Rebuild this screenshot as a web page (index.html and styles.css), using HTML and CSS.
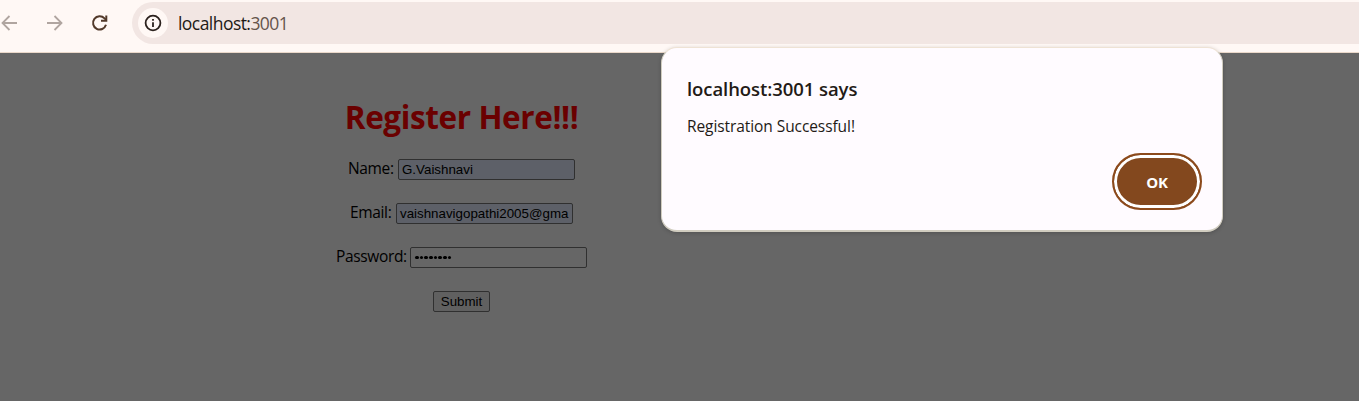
FILE: index.html
```html
<!DOCTYPE html>
<html lang="en">
<head>
<meta charset="utf-8">
<title>localhost:3001</title>
<link rel="stylesheet" href="styles.css">
</head>
<body>
<header class="toolbar">
  <nav class="nav">
    <svg class="icon muted" viewBox="0 0 18 18"><path d="M17 9H3M9.5 2L2.5 9L9.5 16"/></svg>
    <svg class="icon muted" viewBox="0 0 18 18"><path d="M2 9H16M9.5 2L16.5 9L9.5 16"/></svg>
    <svg class="icon reload" viewBox="0 0 18 18"><path d="M16 10.8A6.6 6.6 0 1 1 14.5 4.4L16 5.8"/><path d="M16.3 1.5V6.8H11"/></svg>
  </nav>
  <div class="address">
    <span class="info"><svg class="info-icon" viewBox="0 0 18 18"><circle cx="9" cy="9" r="7.4"/><path d="M9 8.2V13M9 5V6.8"/></svg></span>
    <span class="url">localhost:<span class="port">3001</span></span>
  </div>
</header>
<main class="page">
  <form class="form">
    <h1 class="title">Register Here!!!</h1>
    <div class="row"><label class="label name">Name:</label><div class="field filled">G.Vaishnavi</div></div>
    <div class="row"><label class="label email">Email:</label><div class="field filled snug">vaishnavigopathi2005@gma</div></div>
    <div class="row"><label class="label password">Password:</label><div class="field dots"><i></i><i></i><i></i><i></i><i></i><i></i><i></i><i></i></div></div>
    <div class="row"><button class="submit" type="button">Submit</button></div>
  </form>
</main>
<section class="dialog" role="dialog">
  <h2 class="dialog-title">localhost:3001 says</h2>
  <p class="message">Registration Successful!</p>
  <button class="ok" type="button">OK</button>
</section>
</body>
</html>
```
FILE: styles.css
```css
* { box-sizing: border-box; }
body {
  margin: 0;
  height: 401px;
  overflow: hidden;
  display: flex;
  flex-direction: column;
  background: #666;
  font-family: "Open Sans", "Noto Sans", sans-serif;
}
.toolbar {
  height: 53px;
  flex: none;
  display: flex;
  align-items: flex-start;
  padding-top: 2px;
  background: #fff8f5;
  border-bottom: 1px solid #ead8ca;
}
.nav {
  width: 132px;
  height: 41px;
  display: flex;
  align-items: center;
  gap: 27px;
}
.icon {
  width: 18px;
  height: 18px;
  flex: none;
  fill: none;
  stroke-width: 1.8;
}
.muted { stroke: #b0a5a0; }
.reload { stroke: #52392a; stroke-width: 2; }
.address {
  flex: 1;
  height: 42px;
  display: flex;
  align-items: center;
  gap: 10px;
  padding-left: 6px;
  background: #f2e6e3;
  border-radius: 21px 0 0 21px;
}
.info {
  width: 30px;
  height: 30px;
  display: grid;
  place-items: center;
  background: #fff8f5;
  border-radius: 50%;
}
.info-icon {
  width: 18px;
  height: 18px;
  fill: none;
  stroke: #2b211d;
  stroke-width: 1.8;
}
.url {
  font-size: 17.5px;
  letter-spacing: -0.55px;
  color: #231a16;
}
.port { color: #65544b; }
.page { flex: 1; }
.form {
  width: 923px;
  padding-top: 42px;
  display: flex;
  flex-direction: column;
  align-items: center;
}
.title {
  margin: 0 0 21px;
  height: 43px;
  line-height: 43px;
  font-size: 31.5px;
  font-weight: 700;
  letter-spacing: -0.4px;
  color: #6a0000;
  white-space: nowrap;
}
.row {
  height: 21px;
  margin-bottom: 23px;
  display: flex;
  align-items: center;
}
.label {
  height: 21px;
  font-size: 15.5px;
  line-height: 19px;
  letter-spacing: -0.35px;
  white-space: nowrap;
  color: #000;
}
.name { width: 50px; }
.email { width: 46px; }
.password { width: 74px; }
.field {
  width: 177px;
  height: 21px;
  padding: 0 3px;
  border: 1px solid #303030;
  border-radius: 2px;
  font: 13.33px/19px "Liberation Sans", Arial, sans-serif;
  color: #000;
  white-space: nowrap;
  overflow: hidden;
}
.filled { background: #5d6068; }
.snug { padding-left: 3px; }
.dots {
  display: flex;
  align-items: center;
  gap: 1.2px;
  padding-left: 4px;
}
.dots i {
  width: 3.5px;
  height: 3.5px;
  border-radius: 50%;
  background: #000;
}
.submit {
  width: 57px;
  height: 21px;
  padding: 0;
  border: 1px solid #303030;
  border-radius: 2px;
  background: #606060;
  font: 13.33px/19px "Liberation Sans", Arial, sans-serif;
  color: #000;
}
.dialog {
  position: absolute;
  left: 661px;
  top: 47px;
  width: 562px;
  height: 185px;
  padding: 28px 20px 20px 25px;
  display: flex;
  flex-direction: column;
  border: 1px solid #d1cdc0;
  border-top-color: #eee2d4;
  border-bottom-width: 2px;
  border-radius: 16px;
  background: #fffbff;
  box-shadow: 0 1px 4px rgba(0, 0, 0, 0.2);
}
.dialog-title {
  margin: 0;
  font-size: 18.5px;
  line-height: 26px;
  font-weight: 600;
  letter-spacing: -0.07px;
  color: #231a16;
}
.message {
  margin: 13px 0 0;
  font-size: 15.5px;
  line-height: 22px;
  letter-spacing: -0.08px;
  color: #231a16;
}
.ok {
  width: 90px;
  height: 57px;
  margin-top: auto;
  align-self: flex-end;
  padding: 0;
  border: 2px solid #8c4a1c;
  border-radius: 29px;
  background: #83481e;
  box-shadow: inset 0 0 0 3px #fff;
  font: 700 15px/22px "Open Sans", "Noto Sans", sans-serif;
  letter-spacing: -0.3px;
  color: #fff;
}
```
